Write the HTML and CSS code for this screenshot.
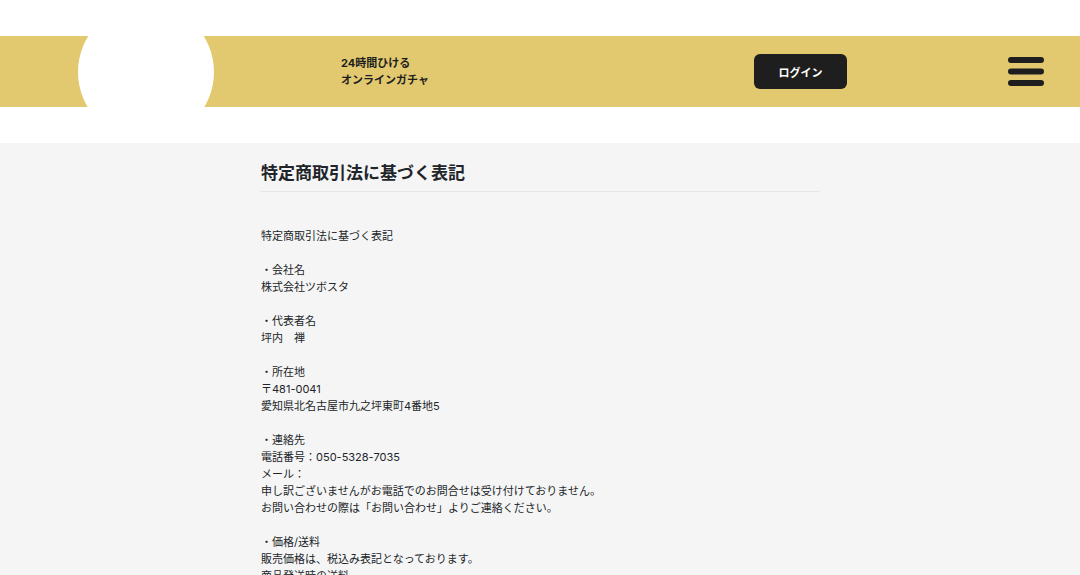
FILE: index.html
```html
<!DOCTYPE html>
<html lang="ja">
<head>
    <meta charset="UTF-8">
    <meta name="viewport" content="width=device-width, initial-scale=1.0">
    <title>特定商取引法に基づく表記</title>
    <link rel="stylesheet" href="styles.css">
</head>
<body>
    <header class="header">
        <div class="header-bar">
            <a href="#" class="logo" aria-label="ホーム"></a>
            <p class="tagline">24時間ひける<br>オンラインガチャ</p>
            <button type="button" class="login-button">ログイン</button>
            <button type="button" class="menu-button" aria-label="メニュー">
                <svg width="36" height="29" viewBox="0 0 36 29" fill="currentColor">
                    <rect x="0" y="0" width="36" height="6" rx="3"/>
                    <rect x="0" y="11.5" width="36" height="6" rx="3"/>
                    <rect x="0" y="23" width="36" height="6" rx="3"/>
                </svg>
            </button>
        </div>
    </header>
    <main class="container">
        <h1 class="page-title">特定商取引法に基づく表記</h1>
        <div class="law-text">
            <p>特定商取引法に基づく表記</p>
            <p>・会社名<br>株式会社ツボスタ</p>
            <p>・代表者名<br>坪内　禅</p>
            <p>・所在地<br>〒481-0041<br>愛知県北名古屋市九之坪東町4番地5</p>
            <p>・連絡先<br>電話番号：050-5328-7035<br>メール：<br>申し訳ございませんがお電話でのお問合せは受け付けておりません。<br>お問い合わせの際は「お問い合わせ」よりご連絡ください。</p>
            <p>・価格/送料<br>販売価格は、税込み表記となっております。<br>商品発送時の送料</p>
        </div>
    </main>
</body>
</html>
```
FILE: styles.css
```css
* {
    box-sizing: border-box;
}
body {
    margin: 0;
    font-family: Inter, "Noto Sans CJK JP", sans-serif;
    font-size: 11px;
    line-height: 17px;
    color: #212529;
    background: #f5f5f5;
}
.header {
    padding: 36px 0;
    background: #ffffff;
}
.header-bar {
    display: flex;
    align-items: center;
    height: 71px;
    padding: 0 36px 0 78px;
    overflow: hidden;
    background: #e2c970;
    color: #1e1e1e;
}
.logo {
    flex: none;
    width: 136px;
    height: 136px;
    border-radius: 50%;
    background: #ffffff;
}
.tagline {
    margin: 0 auto 0 127px;
    font-weight: bold;
}
.login-button {
    width: 93px;
    height: 35px;
    margin-right: 161px;
    padding: 0;
    border: none;
    border-radius: 6px;
    background: #1e1e1e;
    color: #ffffff;
    font-family: inherit;
    font-size: 11px;
    font-weight: bold;
    cursor: pointer;
}
.menu-button {
    display: flex;
    padding: 0;
    border: none;
    background: none;
    color: #1e1e1e;
    cursor: pointer;
}
.container {
    max-width: 560px;
    margin: 0 auto;
    padding-top: 18px;
}
.page-title {
    margin: 0;
    padding: 0 1px 6px;
    border-bottom: 1px solid #e6e6e6;
    font-size: 17px;
    line-height: 24px;
    font-weight: bold;
}
.law-text {
    padding: 36px 1px;
}
.law-text p {
    margin: 0 0 17px;
}
```
